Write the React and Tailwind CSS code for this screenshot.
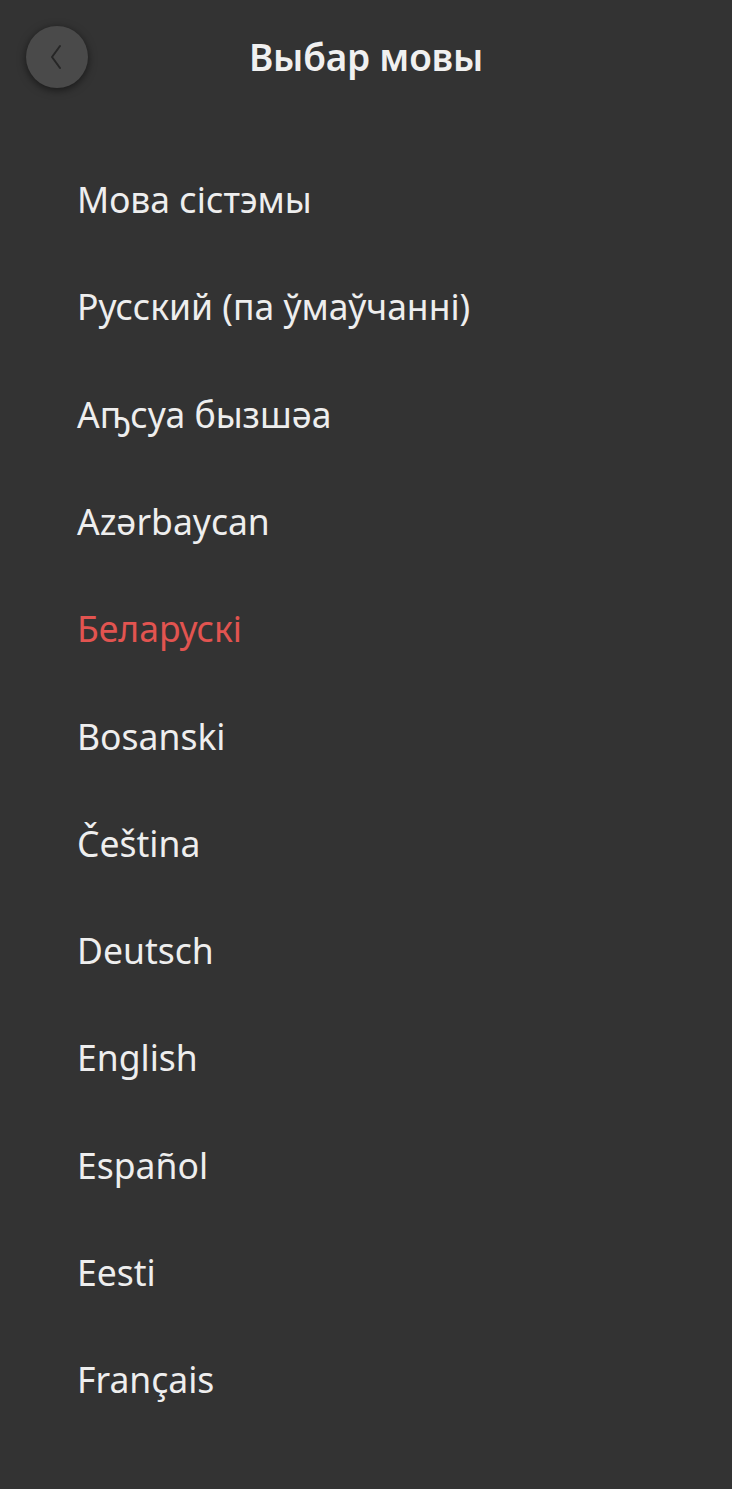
import React from "react";

const languages = [
  "Мова сістэмы",
  "Русский (па ўмаўчанні)",
  "Аҧсуа бызшәа",
  "Azərbaycan",
  "Беларускі",
  "Bosanski",
  "Čeština",
  "Deutsch",
  "English",
  "Español",
  "Eesti",
  "Français",
];

const selected = "Беларускі";

export default function App() {
  return (
    <div
      className="min-h-[1489px] w-full bg-[#333333] text-[#eeeeee]"
      style={{ fontFamily: '"Noto Sans", "Open Sans", sans-serif' }}
    >
      {/* Header */}
      <div className="relative flex h-[114px] items-center justify-center">
        <button className="absolute left-[26px] top-[26px] flex h-[62px] w-[62px] items-center justify-center rounded-full bg-[#4a4a4a] shadow-[0_2px_8px_rgba(0,0,0,0.55)]">
          <svg width="16" height="28" viewBox="0 0 16 28" fill="none" stroke="#262626" strokeWidth="2" strokeLinecap="round" strokeLinejoin="round" className="-ml-[2px]">
            <path d="M12 3 L4 14 L12 25" />
          </svg>
        </button>
        <h1 className="text-[37px] font-semibold tracking-[-0.2px] text-[#f0f0f0]">Выбар мовы</h1>
      </div>

      {/* Language list */}
      <ul className="mt-[32px]">
        {languages.map((lang) => (
          <li
            key={lang}
            className={`flex h-[107.3px] items-center pl-[77px] text-[35.5px] ${
              lang === selected ? "text-[#e25450]" : "text-[#eeeeee]"
            }`}
          >
            {lang}
          </li>
        ))}
      </ul>
    </div>
  );
}
